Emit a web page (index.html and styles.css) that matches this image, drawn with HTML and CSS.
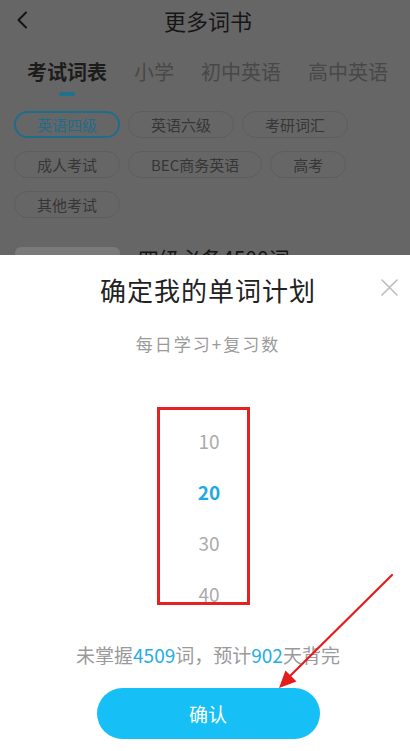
FILE: index.html
```html
<!DOCTYPE html>
<html lang="zh-CN">
<head>
<meta charset="utf-8">
<title>更多词书</title>
<link rel="stylesheet" href="styles.css">
</head>
<body>
<div class="screen">
  <div class="backdrop">
    <div class="nav">
      <span class="nav-back">
        <svg width="12" height="18" viewBox="0 0 12 18"><path d="M10 1.5 L2.5 9 L10 16.5" fill="none" stroke="#141414" stroke-width="2" stroke-linecap="round" stroke-linejoin="round"/></svg>
      </span>
      <span class="nav-title">更多词书</span>
      <span></span>
    </div>
    <div class="tabs">
      <div class="tab tab-active">考试词表<i class="tab-bar"></i></div>
      <div class="tab">小学</div>
      <div class="tab">初中英语</div>
      <div class="tab">高中英语</div>
    </div>
    <div class="chips">
      <span class="chip chip-active">英语四级</span>
      <span class="chip">英语六级</span>
      <span class="chip">考研词汇</span>
      <span class="chip">成人考试</span>
      <span class="chip">BEC商务英语</span>
      <span class="chip">高考</span>
      <span class="chip">其他考试</span>
    </div>
    <div class="book">
      <div class="book-cover"></div>
      <div class="book-name">四级必备4500词</div>
    </div>
  </div>

  <div class="sheet">
    <div class="sheet-head">
      <span></span>
      <h1 class="sheet-title">确定我的单词计划</h1>
      <span class="sheet-close">
        <svg width="17" height="17" viewBox="0 0 17 17"><path d="M1 1 L16 16 M16 1 L1 16" stroke="#bdbdbd" stroke-width="1.6" stroke-linecap="round"/></svg>
      </span>
    </div>
    <p class="sheet-sub">每日学习+复习数</p>
    <div class="picker">
      <div class="picker-item">10</div>
      <div class="picker-item picker-on">20</div>
      <div class="picker-item">30</div>
      <div class="picker-item">40</div>
    </div>
    <p class="sheet-note">未掌握<b>4509</b>词，预计<b>902</b>天背完</p>
    <button class="confirm">确认</button>
  </div>

  <svg class="pointer" width="410" height="751" viewBox="0 0 410 751">
    <line x1="392" y1="575" x2="288" y2="678" stroke="#e51c1c" stroke-width="2.2" stroke-linecap="round"/>
    <polygon points="279,688 285.5,670.5 296.5,681.5" fill="#e51c1c"/>
  </svg>
</div>
</body>
</html>
```
FILE: styles.css
```css
* { box-sizing: border-box; }

html, body {
  margin: 0;
  padding: 0;
}

body {
  font-family: "Noto Sans CJK SC", "Noto Sans", "Liberation Sans", sans-serif;
  background: #ffffff;
}

.screen {
  position: relative;
  width: 410px;
  height: 751px;
  overflow: hidden;
  display: flex;
  flex-direction: column;
}

/* dimmed page behind the sheet */
.backdrop {
  height: 255px;
  flex: none;
  background: #666666;
  overflow: hidden;
}

.nav {
  height: 40px;
  display: grid;
  grid-template-columns: 1fr auto 1fr;
  align-items: center;
  padding-left: 6px;
}

.nav-back {
  display: flex;
  margin-left: 10px;
}

.nav-title {
  font-size: 22px;
  color: #161616;
  line-height: 40px;
}

.tabs {
  display: flex;
  gap: 27px;
  padding-left: 27px;
  margin-top: 18px;
}

.tab {
  position: relative;
  font-size: 20px;
  line-height: 28px;
  color: #484848;
}

.tab-active {
  color: #1c1c1c;
  font-weight: 700;
}

.tab-bar {
  position: absolute;
  left: 50%;
  top: 34px;
  width: 16px;
  height: 4px;
  margin-left: -8px;
  border-radius: 2px;
  background: #20708f;
}

.chips {
  display: flex;
  flex-wrap: wrap;
  column-gap: 8px;
  row-gap: 13px;
  padding: 0 60px 0 14px;
  margin-top: 25px;
}

.chip {
  height: 27px;
  padding: 0 22px;
  border: 1px solid #5d5d5d;
  border-radius: 14px;
  font-size: 15px;
  line-height: 25px;
  color: #363636;
}

.chip-active {
  border: 2px solid #1f6d8c;
  line-height: 23px;
  padding: 0 21px;
  color: #1f6d8c;
}

.book {
  display: flex;
  gap: 18px;
  padding-left: 15px;
  margin-top: 29px;
}

.book-cover {
  width: 105px;
  height: 60px;
  border-radius: 6px;
  background: #7a7a7a;
}

.book-name {
  font-size: 21px;
  line-height: 22px;
  color: #151515;
}

/* bottom sheet */
.sheet {
  flex: 1;
  background: #ffffff;
  display: flex;
  flex-direction: column;
  align-items: center;
  padding-left: 6px;
}

.sheet-head {
  width: 100%;
  display: grid;
  grid-template-columns: 1fr auto 1fr;
  align-items: center;
  padding-top: 17px;
}

.sheet-title {
  margin: 0;
  font-size: 26px;
  font-weight: 400;
  line-height: 36px;
  letter-spacing: 1px;
  color: #222222;
}

.sheet-close {
  justify-self: end;
  display: flex;
  margin-right: 12px;
  margin-top: -6px;
}

.sheet-sub {
  margin: 24px 0 0;
  font-size: 17px;
  line-height: 24px;
  letter-spacing: 2px;
  color: #9a9a9a;
}

.picker {
  align-self: flex-start;
  margin-left: 151px;
  margin-top: 51px;
  width: 93px;
  height: 198px;
  border: 3px solid #e52222;
  padding: 20px 0 0 11px;
  display: flex;
  flex-direction: column;
  gap: 30px;
}

.picker-item {
  height: 21px;
  line-height: 21px;
  text-align: center;
  font-size: 19px;
  color: #ababab;
}

.picker-on {
  color: #1ea9e4;
  font-weight: 700;
}

.sheet-note {
  margin: 37px 0 0;
  font-size: 19px;
  line-height: 26px;
  color: #9a9a9a;
}

.sheet-note b {
  font-weight: 400;
  color: #23ade6;
}

.confirm {
  margin-top: 20px;
  width: 223px;
  height: 51px;
  border: none;
  border-radius: 26px;
  background: #16c0f6;
  color: #ffffff;
  font-family: inherit;
  font-size: 19px;
}

/* annotation arrow drawn above the sheet */
.pointer {
  position: absolute;
  left: 0;
  top: 0;
  pointer-events: none;
}
```
